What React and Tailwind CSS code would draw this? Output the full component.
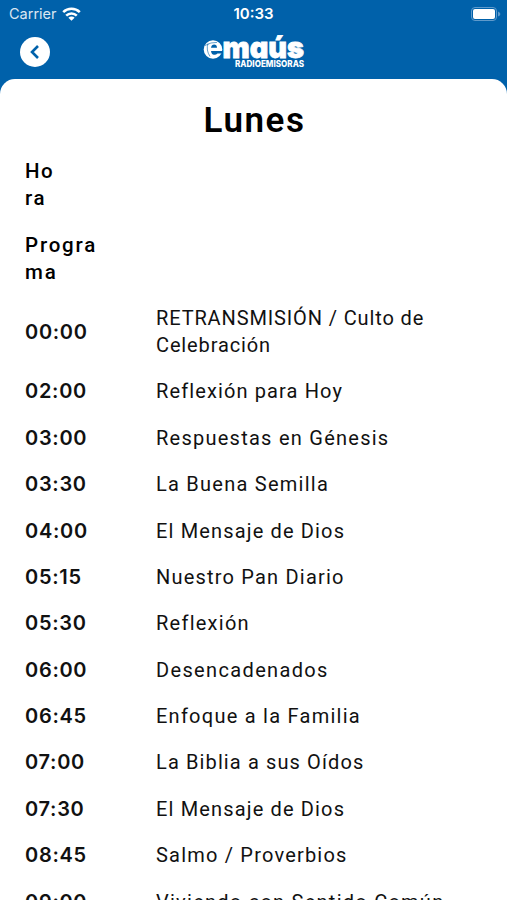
import React from "react";

const programs = [
  { time: "00:00", name: "RETRANSMISIÓN / Culto de Celebración", spacing: "tracking-[0.87px]" },
  { time: "02:00", name: "Reflexión para Hoy", spacing: "tracking-[1.12px]" },
  { time: "03:00", name: "Respuestas en Génesis", spacing: "tracking-[1.25px]" },
  { time: "03:30", name: "La Buena Semilla", spacing: "tracking-[1.25px]" },
  { time: "04:00", name: "El Mensaje de Dios", spacing: "tracking-[1.15px]" },
  { time: "05:15", name: "Nuestro Pan Diario", spacing: "tracking-[1.2px]" },
  { time: "05:30", name: "Reflexión", spacing: "tracking-[1.25px]" },
  { time: "06:00", name: "Desencadenados", spacing: "tracking-[1.35px]" },
  { time: "06:45", name: "Enfoque a la Familia", spacing: "tracking-[1.25px]" },
  { time: "07:00", name: "La Biblia a sus Oídos", spacing: "tracking-[1.12px]" },
  { time: "07:30", name: "El Mensaje de Dios", spacing: "tracking-[1.15px]" },
  { time: "08:45", name: "Salmo / Proverbios", spacing: "tracking-[1.2px]" },
  { time: "09:00", name: "Viviendo con Sentido Común", spacing: "tracking-[1.25px]" },
];

const WifiIcon = () => (
  <svg width="19" height="14" viewBox="0 0 19 14" fill="none" stroke="white" strokeWidth="2.5">
    <path d="M1.2 5.2a11.8 11.8 0 0 1 16.6 0" />
    <path d="M4.2 8.6a7.5 7.5 0 0 1 10.6 0" />
    <path d="M9.5 13.8 6.4 10.7a4.3 4.3 0 0 1 6.2 0z" fill="white" stroke="none" />
  </svg>
);

const BatteryIcon = () => (
  <svg width="30" height="14" viewBox="0 0 30 14">
    <rect x="0.5" y="0.5" width="25" height="13" rx="3.5" fill="none" stroke="#5f9acb" />
    <rect x="2" y="2" width="22" height="10" rx="2" fill="white" />
    <path d="M27 4.5q2.4 1 2.4 2.5T27 9.5z" fill="#5f9acb" />
  </svg>
);

const Logo = () => (
  <svg className="overflow-visible" width="102" height="32" viewBox="0 0 102 32" fill="white">
    {/* globe shaped "e" */}
    <ellipse cx="10" cy="13.5" rx="9.3" ry="9.2" />
    <path d="M8 11.8Q8.6 8.6 11.2 8.6T14 11.8z" fill="#0061aa" />
    <path d="M8 15H20V17.6H14.5Q13 19 11 18.8 8.4 18.4 8 15z" fill="#0061aa" />
    <path d="M2 9.5Q8 6 14 6.4M5 7.5Q2.8 14 7 20.5" fill="none" stroke="#0061aa" strokeWidth="0.6" />
    <text
      x="19.5"
      y="22"
      textLength="81.5"
      lengthAdjust="spacingAndGlyphs"
      fontSize="29.5"
      fontWeight="900"
      fontFamily="Inter, sans-serif"
      className="[font-feature-settings:'cv11']"
      stroke="white"
      strokeWidth="0.8"
    >
      maús
    </text>
    <text
      x="32"
      y="31"
      textLength="69"
      lengthAdjust="spacingAndGlyphs"
      fontSize="9.2"
      fontWeight="800"
      fontFamily="Inter, sans-serif"
    >
      RADIOEMISORAS
    </text>
  </svg>
);

const App = () => {
  return (
    <div className="h-[900px] overflow-hidden bg-[#0061aa] font-['Roboto',sans-serif]">
      <div className="grid h-7 grid-cols-3 items-center pl-[9px] pr-[6px] font-['Inter',sans-serif] text-white">
        <div className="flex items-center gap-[5px]">
          <span className="text-[14.5px] opacity-85">Carrier</span>
          <WifiIcon />
        </div>
        <span className="pr-[3px] text-center text-[15px] font-semibold">10:33</span>
        <div className="flex justify-end">
          <BatteryIcon />
        </div>
      </div>

      <header className="grid h-[51px] grid-cols-3 items-start px-5">
        <button className="mt-[9px] flex h-[30px] w-[30px] items-center justify-center rounded-full bg-white">
          <svg width="10" height="16" viewBox="0 0 10 16" fill="none" stroke="#0061aa" strokeWidth="2.6">
            <path d="M8 2 2 8l6 6" />
          </svg>
        </button>
        <div className="mt-2 flex justify-center pl-[2px]">
          <Logo />
        </div>
      </header>

      <main className="h-[821px] overflow-hidden rounded-t-[15px] bg-white px-[25px] text-xl leading-[27px] text-[#111]">
        <h1 className="h-[69.6px] pl-[2px] pt-[22px] text-center text-[35px] font-semibold leading-[40px] tracking-[1.5px] text-black">
          Lunes
        </h1>
        <div className="py-[9.7px] text-[20.5px] font-medium tracking-[1.5px] text-black">
          Ho
          <br />
          ra
        </div>
        <div className="py-[9.7px] text-[20.5px] font-medium tracking-[1.8px] text-black">
          Progra
          <br />
          ma
        </div>
        {programs.map((item) => (
          <div key={item.time} className="flex items-center py-[9.7px]">
            <span className="w-[131px] shrink-0 font-['Inter',sans-serif] font-semibold tracking-[0.7px]">
              {item.time}
            </span>
            <span className={`w-[300px] ${item.spacing}`}>{item.name}</span>
          </div>
        ))}
      </main>
    </div>
  );
};

export default App;
